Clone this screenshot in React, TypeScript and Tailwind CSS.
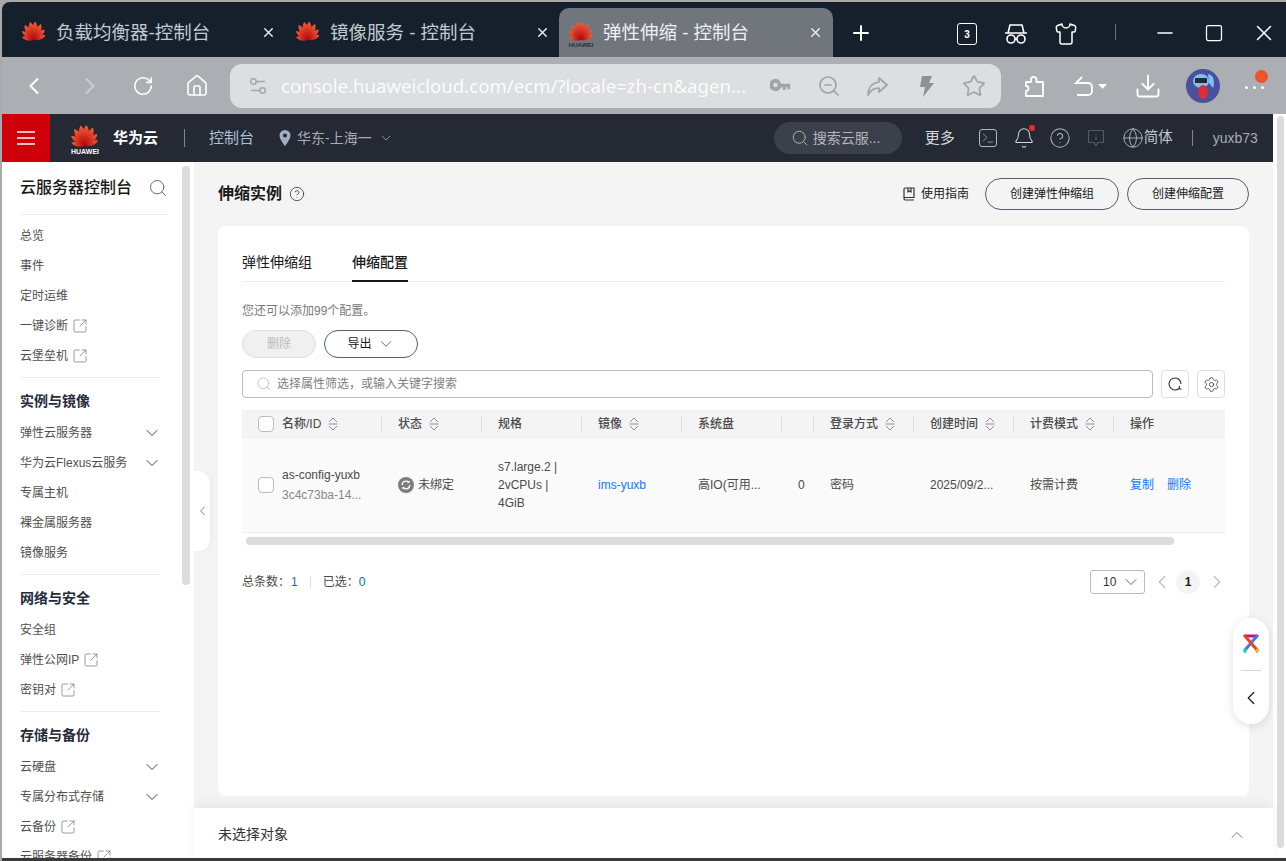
import React from 'react';
import {
  Bell, ChevronDown, ChevronLeft, ChevronRight, ChevronUp, CircleHelp, Download, Globe, House, Minus, Plus,
  RotateCw, Search, Settings, Settings2, Shirt, Square, SquareArrowOutUpRight, Star, Terminal, X, ZoomOut,
} from 'lucide-react';

const PETALS = [
  [-72, 14], [-50, 17], [-28, 20], [-8, 21],
  [8, 21], [28, 20], [50, 17], [72, 14],
];

function HuaweiLogo({ size = 24, label = false, labelColor = '#ffffff' }: { size?: number; label?: boolean; labelColor?: string }) {
  return (
    <svg width={size} height={size} viewBox="0 0 32 32" className="shrink-0">
      <defs>
        <linearGradient id="hw" x1="0" y1="0" x2="0" y2="1">
          <stop offset="0" stopColor="#f4613a" />
          <stop offset="1" stopColor="#b4000a" />
        </linearGradient>
      </defs>
      {PETALS.map(([a, len]) => (
        <path key={a} d="M0 0C-4-6-3.600-11-1.200-15C1.800-12.500 3.400-6 0 0Z" fill="url(#hw)" transform={`translate(16 24) rotate(${a}) scale(${len / 15})`} />
      ))}
      {label && <text x="16" y="31.500" textAnchor="middle" fontSize="7" fontFamily="Liberation Sans" fontWeight="700" fill={labelColor}>HUAWEI</text>}
    </svg>
  );
}

function Tab({ title, active }: { title: string; active?: boolean }) {
  return (
    <div className={active ? 'ml-[5px] flex h-[49px] w-[274px] shrink-0 items-center rounded-t-[10px] bg-[#71767c] pl-[8px] pr-[10px] text-[#eef0f2]' : 'flex h-[49px] w-[274px] shrink-0 items-center pl-[14px] pr-[4px] text-[#c3c9d0]'}>
      <HuaweiLogo size={28} label={active} labelColor="#2a2e33" />
      <span className="ml-[8px] flex-1 whitespace-nowrap text-[18.500px]">{title}</span>
      <X size={15} strokeWidth={2.2} className="text-[#eef0f2]" />
    </div>
  );
}

function NavItem({ label, bold, link, arrow }: { label: string; bold?: boolean; link?: boolean; arrow?: boolean }) {
  return (
    <div className={bold ? 'mb-[2px] flex h-[30px] items-center text-[14px] font-semibold text-[#252b3a]' : 'flex h-[30px] items-center text-[12px] text-[#4f4f4f]'}>
      <span className="whitespace-nowrap">{label}</span>
      {link && <SquareArrowOutUpRight size={16} strokeWidth={1} className="ml-[4px] text-[#666666]" />}
      {arrow && <ChevronDown size={20} strokeWidth={1.2} className="ml-auto text-[#444444]" />}
    </div>
  );
}

function Divider() {
  return <div className="mb-[8px] mt-[6px] h-px w-[140px] bg-[#eeeeee]" />;
}

function Sidebar() {
  return (
    <aside className="flex h-[696px] w-[192px] shrink-0 overflow-hidden bg-white">
      <div className="w-[180px] shrink-0 pl-[18px]">
        <div className="flex h-[53px] w-[148px] items-center justify-between border-b border-[#eeeeee] text-[16px] font-medium text-[#191919]">
          <span>云服务器控制台</span>
          <Search size={20} strokeWidth={1.2} className="text-[#5e6a75]" />
        </div>
        <div className="mt-[6px] w-[142px]">
          <NavItem label="总览" />
          <NavItem label="事件" />
          <NavItem label="定时运维" />
          <NavItem label="一键诊断" link />
          <NavItem label="云堡垒机" link />
          <Divider />
          <NavItem label="实例与镜像" bold />
          <NavItem label="弹性云服务器" arrow />
          <NavItem label="华为云Flexus云服务" arrow />
          <NavItem label="专属主机" />
          <NavItem label="裸金属服务器" />
          <NavItem label="镜像服务" />
          <Divider />
          <NavItem label="网络与安全" bold />
          <NavItem label="安全组" />
          <NavItem label="弹性公网IP" link />
          <NavItem label="密钥对" link />
          <Divider />
          <NavItem label="存储与备份" bold />
          <NavItem label="云硬盘" arrow />
          <NavItem label="专属分布式存储" arrow />
          <NavItem label="云备份" link />
          <NavItem label="云服务器备份" link />
        </div>
      </div>
      <div className="mt-[4px] h-[419px] w-[8px] rounded-[4px] bg-[#dcdcdc]" />
    </aside>
  );
}

function SortIcon() {
  return (
    <svg width="12" height="16" viewBox="0 0 12 16" fill="none" stroke="#8a8e99" strokeWidth="1" className="ml-[6px] shrink-0">
      <path d="M2 6 6 2l4 4" />
      <path d="M1.500 8h9" />
      <path d="M2 10l4 4 4-4" />
    </svg>
  );
}

function Checkbox() {
  return <div className="h-[16px] w-[16px] shrink-0 rounded-[4px] border border-[#bbbbbb] bg-white" />;
}

function Th({ label, sort, last }: { label?: string; sort?: boolean; last?: boolean }) {
  return (
    <div className={last ? 'flex h-[16px] items-center pl-[16px]' : 'flex h-[16px] items-center border-r border-[#dfdfdf] pl-[16px]'}>
      {label && <span className="whitespace-nowrap">{label}</span>}
      {sort && <SortIcon />}
    </div>
  );
}

function RoundButton({ label, width }: { label: string; width: string }) {
  return (
    <button className={`flex h-[32px] ${width} items-center justify-center rounded-full border border-[#575d6c] text-[12px] text-[#191919]`}>
      {label}
    </button>
  );
}

function Main() {
  return (
    <main className="relative h-[696px] min-w-0 flex-1 bg-[#f4f4f4]">
      <div className="flex h-[64px] items-center justify-between pl-[24px] pr-[24px]">
        <div className="flex items-center">
          <span className="text-[16px] font-semibold text-[#191919]">伸缩实例</span>
          <CircleHelp size={16} strokeWidth={1.2} className="ml-[7px] text-[#333333]" />
        </div>
        <div className="flex items-center text-[12px] text-[#191919]">
          <svg width="12" height="14" viewBox="0 0 12 14" fill="none" stroke="#333333" strokeWidth="1.200" className="mr-[6px]">
            <path d="M1 11V2.200C1 1.500 1.500 1 2.200 1H11v9.500H2.200C1.500 10.500 1 11 1 11.800s.5 1.200 1.200 1.200H11" />
            <path d="M5 1v4l1.500-1L8 5V1" />
          </svg>
          <span className="mr-[16px]">使用指南</span>
          <RoundButton label="创建弹性伸缩组" width="w-[134px]" />
          <div className="w-[8px]" />
          <RoundButton label="创建伸缩配置" width="w-[122px]" />
        </div>
      </div>

      <section className="mx-[24px] h-[570px] rounded-[8px] bg-white px-[24px] pt-[24px]">
        <div className="flex h-[32px] gap-[40px] border-b border-[#eeeeee] text-[14px] text-[#191919]">
          <span className="h-[31px] leading-[24px]">弹性伸缩组</span>
          <span className="h-[32px] border-b-2 border-[#191919] font-medium leading-[24px]">伸缩配置</span>
        </div>
        <p className="mt-[21px] text-[12px] leading-[16px] text-[#7a7a7a]">您还可以添加99个配置。</p>
        <div className="mt-[11px] flex gap-[8px] text-[12px]">
          <button className="h-[28px] w-[74px] rounded-full border border-[#dfdfdf] bg-[#f0f0f0] text-[#bbbbbb]">删除</button>
          <button className="flex h-[28px] w-[94px] items-center justify-center rounded-full border border-[#575d6c] text-[#191919]">
            导出<ChevronDown size={18} strokeWidth={1.1} className="ml-[5px] text-[#444444]" />
          </button>
        </div>
        <div className="mt-[12px] flex gap-[8px]">
          <div className="flex h-[28px] flex-1 items-center rounded-[4px] border border-[#bbbbbb] pl-[13px] text-[12px] text-[#808080]">
            <Search size={16} strokeWidth={1.100} className="mr-[5px] text-[#adb0b8]" />
            选择属性筛选，或输入关键字搜索
          </div>
          <button className="flex h-[28px] w-[28px] items-center justify-center rounded-[4px] border border-[#dfdfdf]">
            <svg width="16" height="16" viewBox="0 0 16 16" fill="none" stroke="#333333" strokeWidth="1.100">
              <path d="M14 8a6 6 0 1 0-2 4.500" />
              <path d="M14.500 13.200 12 12.500l.8-2.500" />
            </svg>
          </button>
          <button className="flex h-[28px] w-[28px] items-center justify-center rounded-[4px] border border-[#dfdfdf]">
            <Settings size={17} strokeWidth={1.100} className="text-[#333333]" />
          </button>
        </div>

        <div className="mt-[12px] grid h-[28px] grid-cols-[140px_100px_100px_100px_100px_32px_100px_100px_100px_111px] items-center border-b border-[#eeeeee] bg-[#f4f4f4] text-[12px] font-medium text-[#4a4a4a]">
          <div className="flex h-[16px] items-center border-r border-[#dfdfdf] pl-[16px]">
            <Checkbox />
            <span className="ml-[8px] whitespace-nowrap">名称/ID</span>
            <SortIcon />
          </div>
          <Th label="状态" sort />
          <Th label="规格" />
          <Th label="镜像" sort />
          <Th label="系统盘" />
          <Th />
          <Th label="登录方式" sort />
          <Th label="创建时间" sort />
          <Th label="计费模式" sort />
          <Th label="操作" last />
        </div>
        <div className="grid h-[95px] grid-cols-[140px_100px_100px_100px_100px_32px_100px_100px_100px_111px] items-center border-b border-[#eeeeee] bg-[#fafafa] text-[12px] text-[#4a4a4a]">
          <div className="flex items-center pl-[16px]">
            <Checkbox />
            <div className="ml-[8px] leading-[20px]">
              <div className="whitespace-nowrap">as-config-yuxb</div>
              <div className="whitespace-nowrap text-[#888888]">3c4c73ba-14...</div>
            </div>
          </div>
          <div className="flex items-center pl-[16px]">
            <svg width="16" height="16" viewBox="0 0 16 16" className="mr-[4px]">
              <circle cx="8" cy="8" r="8" fill="#7d7d7d" />
              <path d="M4.200 8a3.800 3.800 0 0 1 6.500-2.700M11.800 8a3.800 3.800 0 0 1-6.500 2.700" stroke="#fff" strokeWidth="1.400" fill="none" />
              <path d="M11.600 3.400v2.600H9zM4.400 12.600V10H7z" fill="#fff" />
            </svg>
            未绑定
          </div>
          <div className="pl-[16px] pr-[8px] leading-[18px]">
            s7.large.2 | 2vCPUs | 4GiB
          </div>
          <div className="pl-[16px] text-[#1476ff]">ims-yuxb</div>
          <div className="whitespace-nowrap pl-[16px]">高IO(可用...</div>
          <div className="pl-[16px]">0</div>
          <div className="pl-[16px]">密码</div>
          <div className="whitespace-nowrap pl-[16px]">2025/09/2...</div>
          <div className="pl-[16px]">按需计费</div>
          <div className="flex gap-[13px] pl-[16px] text-[#1476ff]">
            <span>复制</span>
            <span>删除</span>
          </div>
        </div>
        <div className="mx-[4px] mt-[4px] h-[8px] w-[928px] rounded-[4px] bg-[#dcdcdc]" />
        <div className="mt-[25px] flex h-[24px] items-center text-[12px]">
          <span className="text-[#4a4a4a]">总条数：</span>
          <span className="ml-[1px] text-[#0b6fa8]">1</span>
          <div className="mx-[12px] h-[12px] w-px bg-[#dfdfdf]" />
          <span className="text-[#4a4a4a]">已选：</span>
          <span className="text-[#0b6fa8]">0</span>
          <div className="ml-auto flex h-[24px] w-[55px] items-center justify-between rounded-[3px] border border-[#bbbbbb] pl-[12px] pr-[3px] text-[#333333]">
            10<ChevronDown size={20} strokeWidth={1.100} className="text-[#555555]" />
          </div>
          <ChevronLeft size={22} strokeWidth={1.200} className="ml-[6px] text-[#bbbbbb]" />
          <div className="ml-[3px] flex h-[24px] w-[24px] items-center justify-center rounded-full bg-[#f4f4f4] font-bold text-[#191919]">1</div>
          <ChevronRight size={22} strokeWidth={1.200} className="-mr-[3px] ml-[6px] text-[#bbbbbb]" />
        </div>
      </section>

      <div className="absolute bottom-0 left-0 right-0 flex h-[50px] items-center justify-between bg-white pl-[24px] pr-[26px] pt-[3px] text-[14px] text-[#333333] shadow-[0_-4px_10px_rgba(0,0,0,0.06)]">
        <span>未选择对象</span>
        <ChevronUp size={20} strokeWidth={1.200} className="text-[#777777]" />
      </div>

      <div className="absolute left-0 top-[309px] flex h-[80px] w-[16px] items-center justify-center rounded-r-[12px] bg-white shadow-[2px_0_4px_rgba(0,0,0,0.04)]">
        <ChevronLeft size={18} strokeWidth={1.300} className="ml-[1px] text-[#666666]" />
      </div>

      <div className="absolute left-[1039px] top-[456px] flex h-[106px] w-[36px] flex-col items-center rounded-full bg-white pt-[16px] shadow-[0_2px_10px_rgba(0,0,0,0.12)]">
        <svg width="18" height="20" viewBox="0 0 18 20" fill="none" strokeWidth="3" strokeLinecap="round">
          <path d="M3 2h12" stroke="#c0128c" />
          <path d="M15 2 3 16" stroke="#3a7cf0" />
          <path d="M3 2 15 16" stroke="#f0421c" />
          <path d="M3 16v1.500" stroke="#18d8b0" />
          <path d="M15 16v1.500" stroke="#ffae10" />
        </svg>
        <div className="mt-[16px] h-px w-[20px] bg-[#d5d5d5]" />
        <ChevronLeft size={22} strokeWidth={1.300} className="mt-[16px] text-[#191919]" />
      </div>
    </main>
  );
}

function Toolbar() {
  return (
    <div className="flex h-[57px] items-center bg-[#abaeb2] text-white">
      <ChevronLeft size={28} strokeWidth={1.800} className="ml-[18px]" />
      <ChevronRight size={28} strokeWidth={1.800} className="ml-[28px] text-[#c9cbce]" />
      <RotateCw size={22} strokeWidth={1.800} className="ml-[28px]" />
      <House size={24} strokeWidth={1.600} className="ml-[31px]" />
      <div className="ml-[21px] flex h-[44px] w-[771px] items-center rounded-[12px] bg-[#dcdee0] pl-[17px]">
        <Settings2 size={22} strokeWidth={1.600} className="text-[#a4a7ab]" />
        <span className="ml-[12px] w-[473px] whitespace-nowrap font-['Noto_Sans','Noto_Sans_CJK_SC',sans-serif] text-[18.600px] text-[#fbfbfc]">console.huaweicloud.com/ecm/?locale=zh-cn&amp;agen...</span>
        <svg width="22" height="15" viewBox="0 0 24 16" fill="#a0a3a7" className="ml-[16px]">
          <path d="M6 1a6.500 6.500 0 1 0 6 9h2v3h3v-3h2v2h3V6H12A6.500 6.500 0 0 0 6 1Zm0 4a2.500 2.500 0 1 1 0 5 2.500 2.500 0 0 1 0-5Z" />
        </svg>
        <ZoomOut size={24} strokeWidth={1.700} className="ml-[25px] text-[#a0a3a7]" />
        <svg width="24" height="24" viewBox="0 0 24 24" fill="none" stroke="#a0a3a7" strokeWidth="1.700" strokeLinejoin="round" className="ml-[24px]">
          <path d="M14 4l8 7-8 7v-4C9 14 5.500 16 3 21c0-7 4-12 11-13z" />
        </svg>
        <svg width="24" height="24" viewBox="0 0 24 24" fill="#8d9094" className="ml-[25px]">
          <path d="M8 2h10l-3 7h5L9 23l2-10H6z" />
        </svg>
        <Star size={24} strokeWidth={1.700} className="ml-[24px] text-[#a0a3a7]" />
      </div>
      <svg width="24" height="24" viewBox="0 0 24 24" fill="none" stroke="white" strokeWidth="1.800" strokeLinejoin="round" className="ml-[21px]">
        <path d="M21 22H4v-5a2.500 2.500 0 0 0 0-5V8h5V5.500a2.700 2.700 0 0 1 5.400 0V8H21z" />
      </svg>
      <svg width="34" height="24" viewBox="0 0 34 24" fill="none" stroke="white" strokeWidth="1.800" className="ml-[28px]">
        <path d="M8 3 2 9h12a4 4 0 0 1 4 4v4a4 4 0 0 1-4 4H3" />
        <path d="M24 10l4.500 5 4.500-5z" fill="white" stroke="none" />
      </svg>
      <Download size={28} strokeWidth={1.600} className="ml-[26px]" />
      <svg width="34" height="34" viewBox="0 0 34 34" className="ml-[24px]">
        <circle cx="17" cy="17" r="17" fill="#4a4f9e" />
        <ellipse cx="15" cy="12" rx="8" ry="7" fill="#7fc1ee" />
        <path d="M9 9h12v5H9z" fill="#2a2a35" />
        <ellipse cx="17" cy="23" rx="5" ry="7" fill="#d8303a" />
        <path d="M22 5c6 1 7 8 5 14l-4-5z" fill="#7fc1ee" />
      </svg>
      <div className="relative ml-[25px] mt-[4px] flex gap-[5px]">
        <span className="h-[3px] w-[3px] rounded-full bg-white" />
        <span className="h-[3px] w-[3px] rounded-full bg-white" />
        <span className="h-[3px] w-[3px] rounded-full bg-white" />
        <span className="absolute -top-[16px] left-[10px] h-[13px] w-[13px] rounded-full bg-[#f0522a]" />
      </div>
    </div>
  );
}

export default function App() {
  return (
    <div className="flex h-[861px] w-[1286px] flex-col overflow-hidden bg-[#a9a9a9] pl-[2px] pt-[2px] font-['Liberation_Sans','Noto_Sans_CJK_SC',sans-serif]">
      {/* browser tabs */}
      <div className="flex h-[55px] shrink-0 items-end rounded-tl-[8px] bg-[#16202c] pl-[4px] text-white">
        <Tab title="负载均衡器-控制台" />
        <Tab title="镜像服务 - 控制台" />
        <Tab title="弹性伸缩 - 控制台" active />
        <Plus size={24} strokeWidth={2} className="mb-[12px] ml-[16px]" />
        <div className="mb-[12px] ml-[84px] flex h-[22px] w-[20px] items-center justify-center rounded-[3px] border border-white text-[10px] font-bold">3</div>
        <svg width="24" height="22" viewBox="0 0 24 22" fill="none" stroke="white" strokeWidth="1.600" className="mb-[12px] ml-[27px]">
          <path d="M4 10 6 2h12l2 8M1 10h22" />
          <circle cx="7" cy="16" r="4" />
          <circle cx="17" cy="16" r="4" />
          <path d="M11 16h2" />
        </svg>
        <Shirt size={24} strokeWidth={1.500} className="mb-[11px] ml-[26px]" />
        <div className="mb-[17px] ml-[37px] h-[16px] w-px bg-[#6a7078]" />
        <Minus size={24} strokeWidth={1.500} className="mb-[12px] ml-[37px]" />
        <Square size={20} strokeWidth={1.500} className="mb-[14px] ml-[27px]" />
        <X size={26} strokeWidth={1.400} className="mb-[11px] ml-[27px]" />
      </div>
      <Toolbar />
      <div className="flex h-[744px] shrink-0">
        <div className="w-[1271px] shrink-0">
          {/* console header */}
          <header className="flex h-[48px] items-center bg-[#252933] text-[#c0c6ce]">
            <div className="flex h-[48px] w-[48px] items-center justify-center bg-[#d0000b]">
              <svg width="18" height="16" viewBox="0 0 18 16" stroke="white" strokeWidth="1.600"><path d="M0 2h18M0 8h18M0 14h18" /></svg>
            </div>
            <div className="ml-[19px]"><HuaweiLogo size={32} label /></div>
            <span className="ml-[12px] text-[15px] font-semibold text-white">华为云</span>
            <div className="ml-[26px] h-[18px] w-px bg-[#80848c]" />
            <span className="ml-[24px] text-[15px] text-[#a9c0d8]">控制台</span>
            <svg width="12" height="16" viewBox="0 0 12 16" className="ml-[25px]">
              <path d="M6 0a5.500 5.500 0 0 0-5.500 5.500C.5 9.500 6 16 6 16s5.500-6.500 5.500-10.500A5.500 5.500 0 0 0 6 0Zm0 7.500a2 2 0 1 1 0-4 2 2 0 0 1 0 4Z" fill="#9fb0c2" />
            </svg>
            <span className="ml-[6px] text-[14px] text-[#a7acb4]">华东-上海一</span>
            <ChevronDown size={16} strokeWidth={1.200} className="ml-[6px] text-[#a7acb4]" />
            <div className="ml-[380px] flex h-[32px] w-[128px] items-center rounded-full bg-[#3c404a] pl-[17px] text-[14px] text-[#b4b8be]">
              <Search size={18} strokeWidth={1.200} className="mr-[4px] shrink-0" />
              <span className="whitespace-nowrap">搜索云服...</span>
            </div>
            <span className="ml-[23px] text-[15px] text-[#d3d6da]">更多</span>
            <Terminal size={18} strokeWidth={1.200} className="ml-[24px] rounded-[3px] border border-[#b4b8be] p-[1px] text-[#b4b8be]" />
            <div className="relative ml-[16px]">
              <Bell size={22} strokeWidth={1.100} className="text-[#d3d6da]" />
              <span className="absolute right-[0px] -top-[2px] h-[6px] w-[6px] rounded-full bg-[#ee2a2a]" />
            </div>
            <CircleHelp size={22} strokeWidth={1.100} className="ml-[14px] text-[#b4b8be]" />
            <svg width="18" height="18" viewBox="0 0 18 18" fill="none" stroke="#555a64" strokeWidth="1.200" className="ml-[16px]">
              <path d="M2 1.500h14a.5.5 0 0 1 .5.500v11a.5.5 0 0 1-.5.500h-5l-2 3-2-3H2a.5.5 0 0 1-.5-.5V2a.5.5 0 0 1 .5-.5Z" />
              <path d="M9 5v1M9 7.500V11" />
            </svg>
            <Globe size={22} strokeWidth={1} className="ml-[17px] text-[#b4b8be]" />
            <span className="text-[14.500px] text-[#c0c6ce]">简体</span>
            <div className="ml-[19px] h-[16px] w-px bg-[#80848c]" />
            <span className="ml-[20px] text-[14px] text-[#a7acb4]">yuxb73</span>
          </header>
          <div className="flex">
            <Sidebar />
            <Main />
          </div>
        </div>
        {/* page scrollbar */}
        <div className="h-[744px] w-[13px] shrink-0 bg-white pl-[4px] pt-[2px]">
          <div className="h-[732px] w-[7px] rounded-[4px] bg-[#dcdcdc]" />
        </div>
      </div>
      <div className="flex-1 bg-[#3a3a3a]" />
    </div>
  );
}
